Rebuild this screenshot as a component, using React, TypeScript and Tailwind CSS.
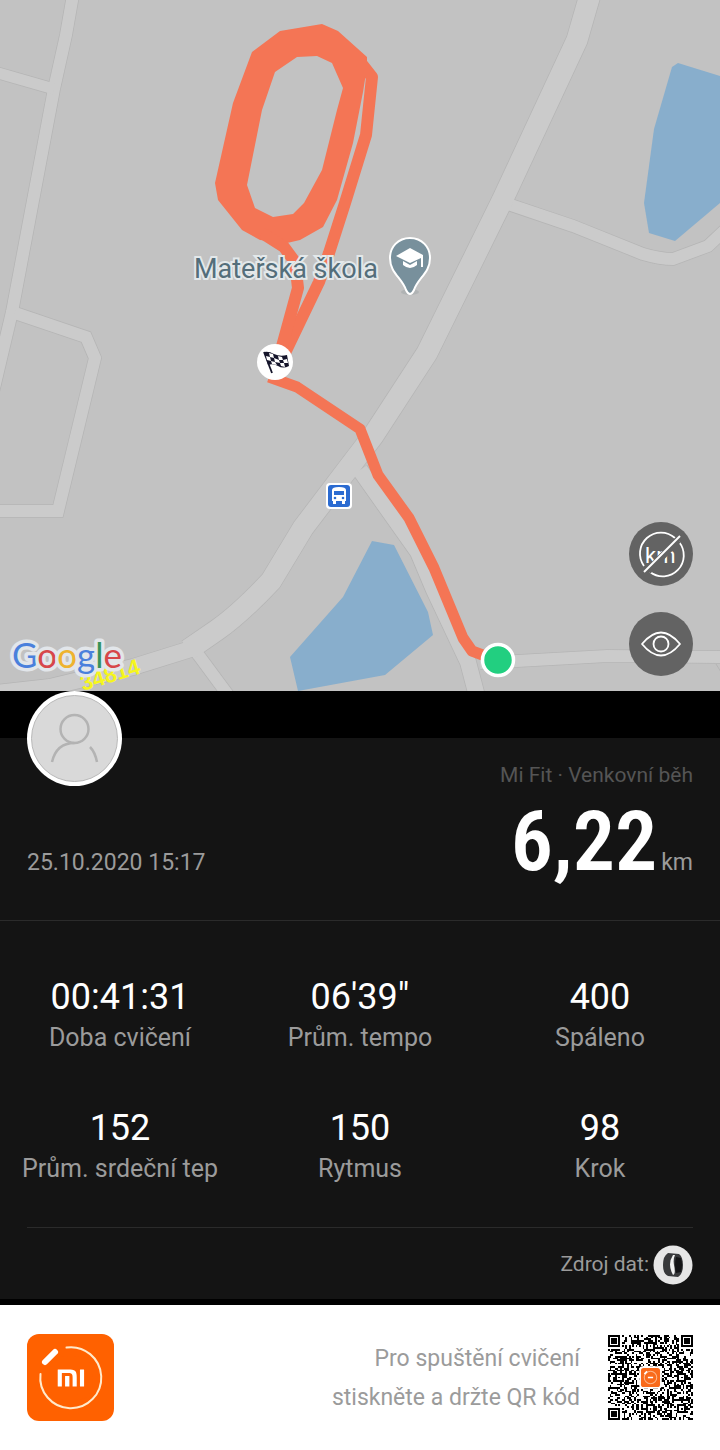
import React from 'react';
import { SiXiaomi } from 'react-icons/si';

const STATS = [
  { value: '00:41:31', label: 'Doba cvičení' },
  { value: '06\'39"', label: 'Prům. tempo' },
  { value: '400', label: 'Spáleno' },
  { value: '152', label: 'Prům. srdeční tep' },
  { value: '150', label: 'Rytmus' },
  { value: '98', label: 'Krok' },
];

const ROADS = [
  { d: 'M73 -5L66 35L54 89L12 312L-10 405', width: 12 },
  { d: 'M-5 72L54 89', width: 11 },
  { d: 'M15 313L86 337L95 358L58 511L-5 511', width: 12 },
  { d: 'M505 203L573 226L643 254Q660 259 673 259L708 246L726 229', width: 12 },
  { d: 'M360 470L418 552L434 590L468 662L478 700', width: 16 },
  { d: 'M480 663L607 656L725 657', width: 12 },
  { d: 'M194 649L228 695', width: 12 },
  { d: 'M-5 693L50 687L133 667L194 648', width: 16 },
  { d: 'M590 -5L577 40L502 201L427 353L373 436L347 470L303 528L271 581Q240 614 217 630L188 650', width: 21 },
];

const FlagMarker: React.FC = () => (
  <g>
    <circle cx="275" cy="362" r="18" fill="#fff" />
    <path d="M264 352L272 373" stroke="#15152b" strokeWidth="1.8" />
    <path d="M264 352Q269 351 274 354Q280 357 287 355L289 366Q283 369 278 366Q273 363 268 365Z" fill="#15152b" />
    <path
      d="M269 353L273 354L274 358L270 357ZM278 356L282 357L283 360L279 360ZM266 356L270 357L271 361L267 360ZM274 358L279 360L280 363L275 362ZM283 360L287 359L288 363L284 363ZM271 361L275 362L277 365L272 364ZM280 363L284 363L285 367L281 366Z"
      fill="#fff"
    />
  </g>
);

const SchoolPin: React.FC = () => (
  <g>
    <ellipse cx="410" cy="292" rx="9" ry="3" fill="#b0b3b4" />
    <path
      d="M410 238C398 238 390 247 390 258C390 273 402 278 406 290Q408 294 410 294Q412 294 414 290C418 278 430 273 430 258C430 247 422 238 410 238Z"
      fill="#78909c"
      stroke="#fff"
      strokeWidth="2"
    />
    <path d="M396 256L410 248L423 255V267H421V258L410 263Z" fill="#fff" />
    <path d="M403 261V265Q410 271 417 265V261L410 265Z" fill="#fff" />
  </g>
);

const BusStop: React.FC = () => (
  <g>
    <rect x="326" y="483" width="26" height="26" rx="4" fill="#fff" />
    <rect x="328" y="485" width="22" height="22" rx="3" fill="#2b6bd1" />
    <path d="M332 490Q332 487 339 487Q346 487 346 490V501H345V504H342V501H336V504H333V501H332Z" fill="#fff" />
    <rect x="334" y="491" width="10" height="4" fill="#2b6bd1" />
    <circle cx="335" cy="498" r="1.3" fill="#2b6bd1" />
    <circle cx="343" cy="498" r="1.3" fill="#2b6bd1" />
  </g>
);

const RouteMap: React.FC = () => (
  <svg viewBox="0 0 720 691" className="block w-full overflow-visible bg-[#c2c2c2]" role="img" aria-label="Mapa trasy">
    <clipPath id="map-area">
      <rect width="720" height="691" />
    </clipPath>
    <g clipPath="url(#map-area)">
      {ROADS.map((road) => (
        <path key={road.d} d={road.d} fill="none" stroke="#b5b5b5" strokeWidth={road.width + 1.5} />
      ))}
      {ROADS.map((road) => (
        <path key={road.d} d={road.d} fill="none" stroke="#cbcbcb" strokeWidth={road.width} />
      ))}
      <path d="M716 664L721 672" stroke="#b5b5b5" />
    </g>

    {/* Ponds */}
    <g fill="#88aecc">
      <path d="M672 67L678 63L720 76V203L675 241L649 233L644 203L654 129Z" />
      <path d="M372 541L394 545L428 612L433 635L385 675L298 691L290 657L343 597Z" />
    </g>

    {/* Track */}
    <path
      fill="#f47555"
      fillRule="evenodd"
      d="M280 31L322 24L338 31L367 57L367 67L363 92L353 143L337 200L323 227L300 240L287 243L260 240L242 230L218 200L215 183L233 103L252 52ZM297 57L275 72L262 110L247 185L255 208L273 217L293 214L304 203L322 170L337 110L343 88L332 63L317 56Z"
    />
    <g fill="none" stroke="#f47555" strokeWidth="12" strokeLinejoin="round">
      <path d="M361 63L372 77L366 135L345 203L329 253L319 282L284 355" />
      <path d="M262 233L284 247L295 262L298 288L281 350" />
      <path d="M269 377L297 387L360 429L378 475L409 518L434 568L463 638L472 651L496 660" strokeWidth="11" />
    </g>

    <text
      x="194"
      y="278"
      fontSize="27"
      fill="#546e7a"
      stroke="#e3e8ea"
      strokeWidth="4"
      paintOrder="stroke"
      className="font-[Roboto,sans-serif]"
    >
      Mateřská škola
    </text>
    <SchoolPin />
    <FlagMarker />
    <BusStop />
    <circle cx="498" cy="660" r="15.5" fill="#22cf80" stroke="#fff" strokeWidth="3.5" />

    <text
      transform="translate(83 691) rotate(-17)"
      fontSize="22"
      fontWeight="bold"
      fill="#f6f61c"
      className="font-['Liberation_Sans',sans-serif]"
    >
      34814
    </text>
    <text
      x="12"
      y="668"
      fontSize="35"
      strokeWidth="7"
      stroke="#e2e6ea"
      strokeLinejoin="round"
      paintOrder="stroke"
      className="font-[Lato,sans-serif]"
    >
      <tspan fill="#4a80dc">G</tspan>
      <tspan fill="#d7474a">o</tspan>
      <tspan fill="#eeb32f">o</tspan>
      <tspan fill="#4a80dc">g</tspan>
      <tspan fill="#36925a">l</tspan>
      <tspan fill="#d7474a">e</tspan>
    </text>
  </svg>
);

const HideKmIcon: React.FC = () => (
  <svg viewBox="0 0 64 64" className="size-16" fill="none" stroke="#fff" strokeWidth="1.8">
    <path d="M46 16A21 21 0 0 0 15 44M21 50A21 21 0 0 0 50 20" />
    <text x="16" y="41" fontSize="22" fill="#fff" stroke="none" className="font-[Roboto,sans-serif]">
      km
    </text>
    <path d="M19 49L49 18" stroke="#636363" strokeWidth="7" />
    <path d="M15 50L51 14" strokeWidth="2" />
  </svg>
);

const EyeIcon: React.FC = () => (
  <svg viewBox="0 0 64 64" className="size-16" fill="none" stroke="#fff" strokeWidth="1.8">
    <path d="M13 32Q32 9 51 32Q32 55 13 32Z" strokeLinejoin="round" />
    <circle cx="32" cy="32" r="7.5" />
  </svg>
);

const Avatar: React.FC = () => (
  <svg viewBox="0 0 95 95" className="size-[95px]" fill="none" role="img" aria-label="Profil">
    <circle cx="47.5" cy="47.5" r="47.5" fill="#fff" />
    <circle cx="47.5" cy="47.5" r="43" fill="#d9d9d9" stroke="#b9b9b9" />
    <g stroke="#b3b3b3" strokeWidth="2.5">
      <circle cx="47.5" cy="38" r="14" />
      <path d="M25 71C28 58 36 52 47.5 52M63 56Q68 61 70 71" />
    </g>
  </svg>
);

const BandIcon: React.FC = () => (
  <svg viewBox="0 0 40 40" className="size-10" role="img" aria-label="Mi Band">
    <circle cx="20" cy="20" r="19.5" fill="#e6e6e6" />
    <path d="M15 8Q10 11 10 20Q10 29 15 31L25 32Q30 29 30 20Q30 12 26 9Z" fill="#38393b" />
    <path d="M20 10Q14 19 20 30Q23 29 21 20Q20 14 22 10Z" fill="#f1f1f1" />
    <path d="M23 12Q21 20 23 28L28 27Q30 20 28 13Z" fill="#141416" />
  </svg>
);

const QR_SIZE = 49;
const ALIGNMENT = [6, 24, 42];

const isDark = (x: number, y: number) => {
  // Finder marks
  for (const [cx, cy] of [[3, 3], [QR_SIZE - 4, 3], [3, QR_SIZE - 4]]) {
    const dist = Math.max(Math.abs(x - cx), Math.abs(y - cy));
    if (dist <= 4) return dist === 3 || dist <= 1;
  }
  // Alignment marks
  for (const cx of ALIGNMENT) {
    for (const cy of ALIGNMENT) {
      const corner = (cx === 6 && cy !== 24) || (cx === 42 && cy === 6);
      const dist = Math.max(Math.abs(x - cx), Math.abs(y - cy));
      if (!corner && dist <= 2) return dist !== 1;
    }
  }
  if (x === 6 || y === 6) return (x + y) % 2 === 0;
  const n = Math.sin(x * 12.9898 + y * 78.233) * 43758.5453;
  return n - Math.floor(n) < 0.5;
};

const qrPath = () => {
  let d = '';
  for (let y = 0; y < QR_SIZE; y++) {
    for (let x = 0; x < QR_SIZE; x++) {
      if (isDark(x, y)) d += `M${x} ${y}h1v1h-1z`;
    }
  }
  return d;
};

const QrCode: React.FC = () => (
  <svg viewBox="0 0 49 49" className="size-[85px] shrink-0" role="img" aria-label="QR kód">
    <path d={qrPath()} fill="#000" shapeRendering="crispEdges" />
    <rect x="18" y="18" width="13" height="13" rx="2" fill="#fff" />
    <rect x="19" y="19" width="11" height="11" rx="1.5" fill="#f96a1b" />
    <circle cx="24.5" cy="24.5" r="3.6" fill="none" stroke="#fbb78c" strokeWidth="0.6" />
    <path d="M21 22.5L22.5 21M23 24.5H26" stroke="#fff" strokeWidth="1" />
  </svg>
);

const MiFitLogo: React.FC = () => (
  <div className="relative flex size-[87px] shrink-0 items-center justify-center rounded-xl bg-[#ff6100]">
    <div className="absolute size-7 bg-white" />
    <SiXiaomi className="relative size-[44px] text-[#ff6100]" />
    <svg viewBox="0 0 87 87" className="absolute inset-0" fill="none" stroke="#fff" strokeLinecap="round">
      <path d="M39.5 13.500A30.500 30.500 0 1 1 13.500 40" stroke="#ffeacb" strokeWidth="2" />
      <path d="M18 28L28 18" strokeWidth="6" />
    </svg>
  </div>
);

const App: React.FC = () => {
  return (
    <main className="w-full bg-black font-[Roboto,sans-serif] text-[#9b9b9b]">
      <section className="relative">
        <RouteMap />
        <div className="absolute right-[27px] bottom-[15px] flex flex-col gap-[26px]">
          <button type="button" aria-label="Skrýt kilometry" className="size-16 rounded-full bg-[#636363]">
            <HideKmIcon />
          </button>
          <button type="button" aria-label="Zobrazit mapu" className="size-16 rounded-full bg-[#636363]">
            <EyeIcon />
          </button>
        </div>
      </section>

      <section className="relative pt-[47px] pb-[6px]">
        <div className="absolute top-0 left-[27px]">
          <Avatar />
        </div>

        <div className="bg-[#141414]">
          <header className="border-b border-[#2b2b2b] px-[27px] pt-[22px] pb-[34px]">
            <p className="text-right text-[21px] leading-[30px] text-[#555555]">Mi Fit · Venkovní běh</p>
            <div className="mt-2 flex items-baseline justify-between">
              <time className="text-[23px]">25.10.2020 15:17</time>
              <p className="flex items-baseline gap-1">
                <span className="font-['Roboto_Condensed','Liberation_Sans_Narrow',Roboto,sans-serif] text-[84px] leading-[88px] font-semibold text-white">
                  6,22
                </span>
                <span className="text-[23px]">km</span>
              </p>
            </div>
          </header>

          <dl className="grid grid-cols-3 gap-y-[49px] pt-[54px] pb-[39px] text-center">
            {STATS.map((stat) => (
              <div key={stat.label} className="flex flex-col-reverse">
                <dt className="text-[25px] leading-[38px]">{stat.label}</dt>
                <dd className="text-[36px] leading-[44px] text-white">{stat.value}</dd>
              </div>
            ))}
          </dl>

          <div className="mx-[27px] flex items-center justify-end gap-1 border-t border-[#2b2b2b] pt-[17px] pb-[14px]">
            <span className="text-[21px]">Zdroj dat:</span>
            <BandIcon />
          </div>
        </div>
      </section>

      <footer className="flex items-center justify-between bg-white px-[27px] py-[29px]">
        <MiFitLogo />
        <div className="flex items-center gap-7">
          <p className="text-right text-[23px] leading-[39px]">
            Pro spuštění cvičení
            <br />
            stiskněte a držte QR kód
          </p>
          <QrCode />
        </div>
      </footer>
    </main>
  );
};

export default App;
